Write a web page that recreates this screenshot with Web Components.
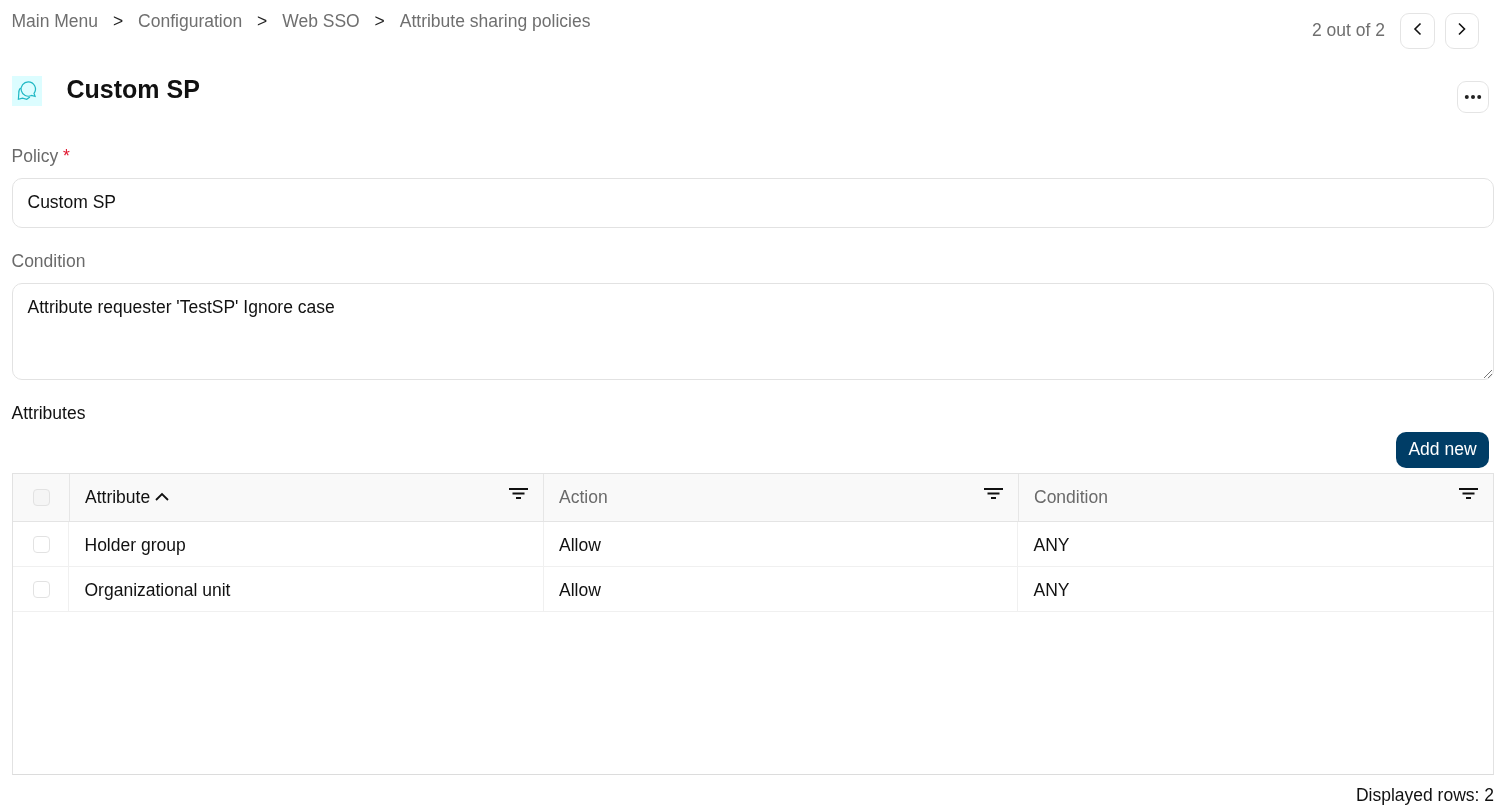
<!DOCTYPE html>
<html><head><meta charset="utf-8"><title>Custom SP</title>
<style>
html,body{margin:0;padding:0;background:#fff;overflow:hidden}
body{font:17.5px/21px "Liberation Sans",Arial,sans-serif;color:#111}
</style></head><body>
<policy-page></policy-page>
<template id="t-crumbs"><style>
:host{display:flex;align-items:center;color:#6f6f6f;font-size:17.5px;line-height:21px}
.s{color:#222;margin:0 14.9px}
</style><span>Main Menu</span><span class="s">&gt;</span><span>Configuration</span><span class="s">&gt;</span><span>Web SSO</span><span class="s">&gt;</span><span>Attribute sharing policies</span></template>

<template id="t-btn"><style>
:host{display:inline-flex;align-items:center;justify-content:center;box-sizing:border-box;background:#fff;border:1px solid #e4e4e4;border-radius:9px;color:#111}
svg{display:block}
</style><slot></slot></template>

<template id="t-pager"><style>
:host{display:flex;align-items:center;color:#6f6f6f;font-size:17.5px;line-height:21px}
span{margin-right:15px;margin-top:-2px}
icon-btn{width:35px;height:36px}
icon-btn+icon-btn{margin-left:10px;width:34px}
svg{margin-top:-5px}
</style><span>2 out of 2</span>
<icon-btn><svg width="14" height="16" viewBox="0 0 14 16" fill="none" stroke="#111" stroke-width="1.6"><path d="M9.500 2.500 4 8l5.500 5.500"/></svg></icon-btn>
<icon-btn><svg width="14" height="16" viewBox="0 0 14 16" fill="none" stroke="#111" stroke-width="1.6"><path d="M4 2.500 9.500 8 4 13.500"/></svg></icon-btn></template>

<template id="t-title"><style>
:host{display:flex;align-items:flex-start;height:83px}
.ic{width:30px;height:30px;background:#dcfdff;margin-top:13px}
.ic svg{display:block}
h1{margin:12px 0 0 25px;font-size:25px;line-height:29px;font-weight:700;color:#111}
.sp{flex:1}
icon-btn{width:32px;height:32px;margin:18px 5px 0 0}
</style><div class="ic"><svg width="30" height="30" viewBox="0 0 30 30" fill="none" stroke="#1fb8c4" stroke-width="1.2"><path d="M16.200 5.800a7.200 7.200 0 1 0 3.200 13.700l3.700.9-1.100-3.100a7.200 7.200 0 0 0-5.800-11.500z"/><path d="M8.800 12C7.500 13 6.600 15 6.800 17.300L6.400 23.300l4.100-1.200 4.200 1.200 3.200-2.400"/></svg></div>
<h1>Custom SP</h1><div class="sp"></div>
<icon-btn><svg width="18" height="6" viewBox="0 0 18 6" fill="#222"><circle cx="2.800" cy="3" r="2"/><circle cx="9" cy="3" r="2"/><circle cx="15.200" cy="3" r="2"/></svg></icon-btn></template>

<template id="t-field"><style>
:host{display:block}
label{display:block;color:#6a6a6a;line-height:21px;margin-bottom:11px}
.box{box-sizing:border-box;border:1px solid #e2e2e2;border-radius:10px;padding:13px 15px;color:#111;position:relative}
:host([rows]) .box{height:97px}
:host(:not([rows])) .box{height:50px}
svg{position:absolute;right:0;bottom:0}
</style><label><slot name="label"></slot></label><div class="box"><slot></slot><svg id="g" width="11" height="11" viewBox="0 0 11 11" stroke="#777" stroke-width="1" style="display:none"><path d="M10 2 2 10M10 6 6 10"/></svg></div></template>

<template id="t-table"><style>
:host{display:block;box-sizing:border-box;height:302px;margin-left:.5px;border:1px solid #e2e2e2;border-bottom-color:#dcdcdc}
.r{display:grid;align-items:center}
.h{grid-template-columns:57px 474px 475px 1fr;height:48px;background:#f9f9f9;border-bottom:1px solid #e4e4e4;box-sizing:border-box;color:#6a6a6a}
.b{grid-template-columns:56px 475px 474px 1fr;height:45px;box-sizing:border-box;border-bottom:1px solid #f0f0f0}
.c{height:100%;box-sizing:border-box;display:flex;align-items:center;padding-left:15px;border-right:1px solid #e6e6e6;position:relative}
.b .c{border-right-color:#f0f0f0;padding-top:2px;padding-left:15.5px}
.b .c:nth-child(3){padding-left:15px}
.c:last-child{border-right:0}
.c.x,.b .c.x,.h .c.x{justify-content:center;padding-left:0}
.k{width:17px;height:17px;box-sizing:border-box;border:1px solid #e2e2e2;border-radius:4px;background:#fff}
.h .k{background:#f5f5f5;margin-left:1px}
.b .k{margin-left:1px;margin-bottom:1px}
.on{color:#111}
.up{margin-left:5px;margin-top:-3px}
.f{margin-left:auto;margin-right:15.5px;margin-top:-8px;width:19px;height:11px}
</style>
<div class="r h"><div class="c x"><span class="k"></span></div>
<div class="c on">Attribute<svg class="up" width="14" height="9" viewBox="0 0 14 9" fill="none" stroke="#111" stroke-width="1.800"><path d="M1 8 7 2l6 6"/></svg><svg class="f" viewBox="0 0 19 11" fill="#111"><rect width="19" height="2"/><rect x="3.500" y="4.500" width="12" height="2"/><rect x="7" y="9" width="5" height="2"/></svg></div>
<div class="c">Action<svg class="f" viewBox="0 0 19 11" fill="#111"><rect width="19" height="2"/><rect x="3.500" y="4.500" width="12" height="2"/><rect x="7" y="9" width="5" height="2"/></svg></div>
<div class="c">Condition<svg class="f" viewBox="0 0 19 11" fill="#111"><rect width="19" height="2"/><rect x="3.500" y="4.500" width="12" height="2"/><rect x="7" y="9" width="5" height="2"/></svg></div></div>
<div class="r b"><div class="c x"><span class="k"></span></div><div class="c">Holder group</div><div class="c">Allow</div><div class="c">ANY</div></div>
<div class="r b"><div class="c x"><span class="k"></span></div><div class="c">Organizational unit</div><div class="c">Allow</div><div class="c">ANY</div></div>
</template>

<template id="t-page"><style>
:host{display:block;box-sizing:border-box;width:1494px;padding:0 0 0 11.5px;height:810px;overflow:hidden;will-change:transform}
.top{display:flex;justify-content:space-between;align-items:flex-start;height:63px}
crumbs-bar{margin-top:11px}
pager-ctl{margin:13px 15px 0 0}
.cond{margin-top:23px}
.attr{margin-top:23px;line-height:21px;color:#111}
.act{display:flex;justify-content:flex-end;margin:8px 5px 5px 0}
.add{height:36px;width:93px;box-sizing:border-box;padding-bottom:2px;background:#003d66;color:#fff;border:0;border-radius:10px;display:flex;align-items:center;justify-content:center}
.foot{text-align:right;margin-top:10px}
.req{color:#e0152d}
</style>
<div class="top"><crumbs-bar></crumbs-bar><pager-ctl></pager-ctl></div>
<title-row></title-row>
<form-field><span slot="label">Policy <span class="req">*</span></span>Custom SP</form-field>
<form-field class="cond" rows="3"><span slot="label">Condition</span>Attribute requester 'TestSP' Ignore case</form-field>
<div class="attr">Attributes</div>
<div class="act"><div class="add">Add new</div></div>
<data-table></data-table>
<div class="foot">Displayed rows: 2</div>
</template>
<script>
const reg=(n,t,after)=>customElements.define(n,class extends HTMLElement{constructor(){super();this.attachShadow({mode:'open'}).appendChild(document.getElementById(t).content.cloneNode(true));if(after)after(this)}});
reg('icon-btn','t-btn');
reg('crumbs-bar','t-crumbs');
reg('pager-ctl','t-pager');
reg('title-row','t-title');
reg('form-field','t-field',el=>{if(el.hasAttribute('rows'))el.shadowRoot.getElementById('g').style.display='block'});
reg('data-table','t-table');
reg('policy-page','t-page');
</script>
</body></html>
